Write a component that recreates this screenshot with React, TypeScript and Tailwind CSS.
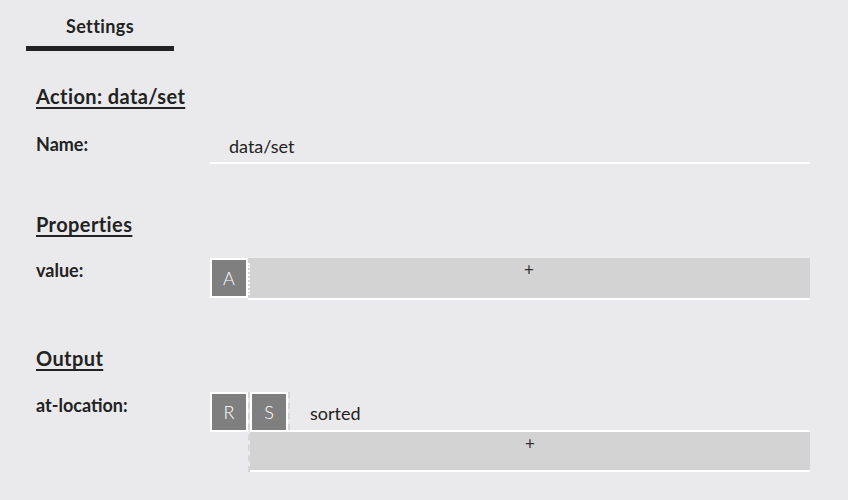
import React from 'react';

const Chip: React.FC<{ letter: string }> = ({ letter }) => (
  <div className="w-[38px] h-[40px] border-2 border-white bg-[#7f7f7f] text-white text-[18px] font-light flex items-center justify-center shrink-0">
    {letter}
  </div>
);

const Heading: React.FC<{ children: React.ReactNode; className?: string }> = ({ children, className }) => (
  <h2 className={`text-[20px] leading-[24px] font-bold tracking-[0.4px] underline decoration-2 underline-offset-[3px] ${className ?? ''}`}>
    {children}
  </h2>
);

export default function App() {
  return (
    <div className="min-h-screen bg-[#eaeaec] text-[#222] font-['Lato',sans-serif]">
      <div className="pt-[14px] pl-[26px]">
        <div className="w-[148px] text-center text-[18px] leading-[24px] font-bold tracking-[0.4px] pb-[8px] border-b-[5px] border-[#222]">
          Settings
        </div>
      </div>

      <div className="pl-[36px] w-[810px]">
        <Heading className="mt-[33px]">Action: data/set</Heading>

        <div className="mt-[20px] grid grid-cols-[174px_600px]">
          <div className="pt-[4px] text-[18px] leading-[24px] font-bold">Name:</div>
          <div className="h-[36px] border-b-2 border-white pl-[19px] pt-[6px] text-[18px] leading-[24px]">data/set</div>
        </div>

        <Heading className="mt-[48px]">Properties</Heading>

        <div className="mt-[22px] grid grid-cols-[174px_600px]">
          <div className="text-[18px] leading-[24px] font-bold">value:</div>
          <div className="flex">
            <Chip letter="A" />
            <div className="flex-1 relative">
              <div className="absolute left-0 top-[5px] bottom-[5px] border-l-2 border-dotted border-white" />
              <div className="h-[42px] bg-[#d3d3d3] border-b-2 border-white flex justify-center pt-[2px] text-[17px] text-[#333] leading-[20px]">
                +
              </div>
            </div>
          </div>
        </div>

        <Heading className="mt-[46px]">Output</Heading>

        <div className="mt-[22px] grid grid-cols-[174px_600px]">
          <div className="pt-[1px] text-[18px] leading-[24px] font-bold">at-location:</div>
          <div className="flex">
            <Chip letter="R" />
            <div className="flex-1 border-l-2 border-dashed border-[#d6d6d6]">
              <div className="flex items-center h-[38px]">
                <div className="border-r-2 border-dashed border-[#d6d6d6] h-full">
                  <Chip letter="S" />
                </div>
                <span className="ml-[20px] pt-[4px] text-[18px] leading-[24px]">sorted</span>
              </div>
              <div className="border-t-2 border-white">
                <div className="h-[40px] bg-[#d3d3d3] border-b-2 border-white flex justify-center pt-[2px] text-[17px] text-[#333] leading-[20px]">
                  +
                </div>
              </div>
            </div>
          </div>
        </div>
      </div>
    </div>
  );
}
